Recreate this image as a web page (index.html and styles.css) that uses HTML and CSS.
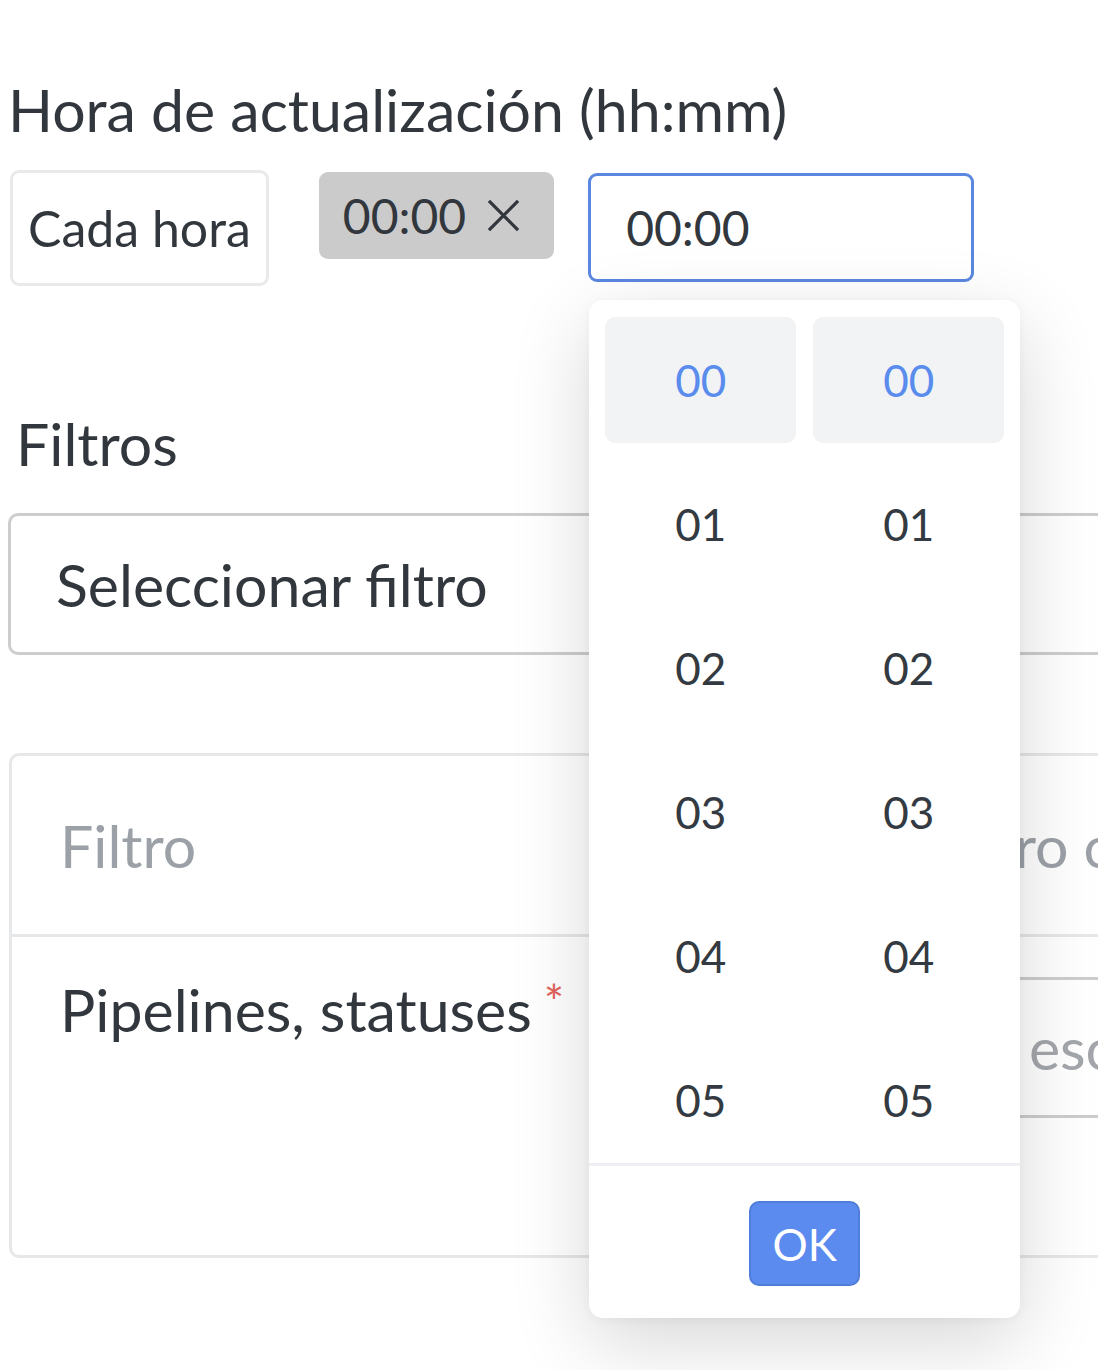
FILE: index.html
```html
<!DOCTYPE html>
<html lang="es">
<head>
<meta charset="utf-8">
<title>Hora de actualización</title>
<link rel="stylesheet" href="styles.css">
</head>
<body>
<div class="page">
  <section class="update">
    <div class="field-label">Hora de actualización (hh:mm)</div>
    <div class="time-row">
      <button class="btn-hourly" type="button">Cada hora</button>
      <span class="chip">
        <span class="chip-text">00:00</span>
        <svg class="chip-x" viewBox="0 0 34 34" aria-hidden="true">
          <path d="M2 2 L32 32 M32 2 L2 32" />
        </svg>
      </span>
      <div class="time-picker">
        <div class="time-input">00:00</div>
        <div class="picker-panel">
          <div class="picker-lists">
            <ul class="picker-col">
              <li class="is-selected">00</li><li>01</li><li>02</li><li>03</li><li>04</li><li>05</li>
            </ul>
            <ul class="picker-col">
              <li class="is-selected">00</li><li>01</li><li>02</li><li>03</li><li>04</li><li>05</li>
            </ul>
          </div>
          <div class="picker-footer">
            <button class="btn-ok" type="button">OK</button>
          </div>
        </div>
      </div>
    </div>
  </section>

  <h3 class="section-title">Filtros</h3>
  <div class="select">Seleccionar filtro</div>

  <div class="filter-table">
    <div class="ft-head">
      <div class="ft-cell">Filtro</div>
      <div class="ft-cell ft-cell-2">Parámetro con valor</div>
    </div>
    <div class="ft-row">
      <div class="ft-cell">Pipelines, statuses<span class="req">*</span></div>
      <div class="ft-cell ft-cell-2">
        <div class="ft-input">Elige o escribe</div>
      </div>
    </div>
  </div>
</div>
</body>
</html>
```

FILE: styles.css
```css
html, body {
  margin: 0;
  padding: 0;
  background: #ffffff;
}

body {
  font-family: Lato, "Open Sans", sans-serif;
  color: #32373e;
}

/* the page frame clips the wide form controls at its right edge */
.page {
  box-sizing: border-box;
  width: 1098px;
  min-height: 1370px;
  padding-top: 74px;
  overflow: hidden;
}

/* update time */
.field-label {
  margin-left: 8px;
  font-size: 59px;
  line-height: 71px;
}

.time-row {
  display: flex;
  align-items: flex-start;
  margin-left: 10px;
  margin-top: 25px;
}

.btn-hourly {
  box-sizing: border-box;
  height: 116px;
  padding: 0 15px;
  border: 3px solid #e8e9eb;
  border-radius: 9px;
  background: #ffffff;
  font-family: inherit;
  font-size: 50px;
  color: #32373e;
}

.chip {
  display: flex;
  align-items: center;
  gap: 21px;
  box-sizing: border-box;
  height: 87px;
  margin-top: 2px;
  margin-left: 50px;
  padding: 0 34px 0 24px;
  background: #cbcbcb;
  border-radius: 9px;
  font-size: 48px;
  color: #32373e;
}

.chip-x {
  width: 33px;
  height: 33px;
}

.chip-x path {
  stroke: #32373e;
  stroke-width: 3.4;
  fill: none;
}

.time-picker {
  position: relative;
  margin-left: 34px;
  margin-top: 3px;
  z-index: 5;
}

.time-input {
  display: flex;
  align-items: center;
  box-sizing: border-box;
  width: 386px;
  height: 109px;
  padding-left: 35px;
  border: 3px solid #5a87df;
  border-radius: 9px;
  background: #ffffff;
  font-size: 48px;
}

/* dropdown panel */
.picker-panel {
  position: absolute;
  top: 127px;
  left: 1px;
  width: 431px;
  height: 1018px;
  background: #ffffff;
  border-radius: 14px;
  box-shadow: 0 24px 80px rgba(0, 0, 0, 0.16), 0 2px 10px rgba(0, 0, 0, 0.04);
  display: flex;
  flex-direction: column;
}

.picker-lists {
  box-sizing: border-box;
  height: 863px;
  padding: 17px 16px 0;
  display: grid;
  grid-template-columns: 1fr 1fr;
  column-gap: 17px;
  overflow: hidden;
}

.picker-col {
  list-style: none;
  margin: 0;
  padding: 0;
  display: flex;
  flex-direction: column;
  gap: 18px;
}

.picker-col li {
  flex: 0 0 126px;
  display: flex;
  align-items: center;
  justify-content: center;
  border-radius: 10px;
  font-size: 44px;
  color: #333a41;
}

.picker-col li.is-selected {
  background: #f2f3f5;
  color: #5a8cee;
}

.picker-footer {
  flex: 1;
  border-top: 3px solid #eef0f3;
  display: flex;
  justify-content: center;
  padding-top: 35px;
}

.btn-ok {
  box-sizing: border-box;
  width: 111px;
  height: 85px;
  border: 2px solid #4f7dd8;
  border-radius: 10px;
  background: #5c8bef;
  color: #ffffff;
  font-family: inherit;
  font-size: 44px;
  padding: 0;
}

/* filters */
.section-title {
  margin: 122px 0 0 16px;
  font-size: 59px;
  font-weight: 400;
  line-height: 71px;
}

.select {
  display: flex;
  align-items: center;
  box-sizing: border-box;
  width: 1400px;
  height: 142px;
  margin: 34px 0 0 8px;
  padding-left: 45px;
  border: 3px solid #cdcdcd;
  border-radius: 10px;
  font-size: 59px;
}

.filter-table {
  box-sizing: border-box;
  width: 1400px;
  margin: 98px 0 0 9px;
  border: 3px solid #e6e7e9;
  border-radius: 10px;
  font-size: 59px;
}

.ft-head,
.ft-row {
  display: grid;
  grid-template-columns: 738px 1fr;
}

.ft-head {
  height: 178px;
  border-bottom: 3px solid #e6e7e9;
  color: #9ba1a7;
}

.ft-head .ft-cell {
  display: flex;
  align-items: center;
  padding-left: 48px;
}

.ft-head .ft-cell-2 {
  padding-left: 50px;
}

.ft-row {
  height: 318px;
}

.ft-row .ft-cell {
  padding: 37px 0 0 48px;
  line-height: 71px;
}

.ft-row .ft-cell-2 {
  padding: 40px 0 0 53px;
}

.req {
  display: inline-block;
  position: relative;
  top: 11px;
  margin-left: 12px;
  vertical-align: top;
  font-size: 48px;
  line-height: 34px;
  color: #e2645d;
}

.ft-input {
  display: flex;
  align-items: center;
  box-sizing: border-box;
  height: 141px;
  padding-left: 36px;
  border: 3px solid #cdcdcd;
  border-radius: 10px;
  color: #a3a6aa;
}
```
